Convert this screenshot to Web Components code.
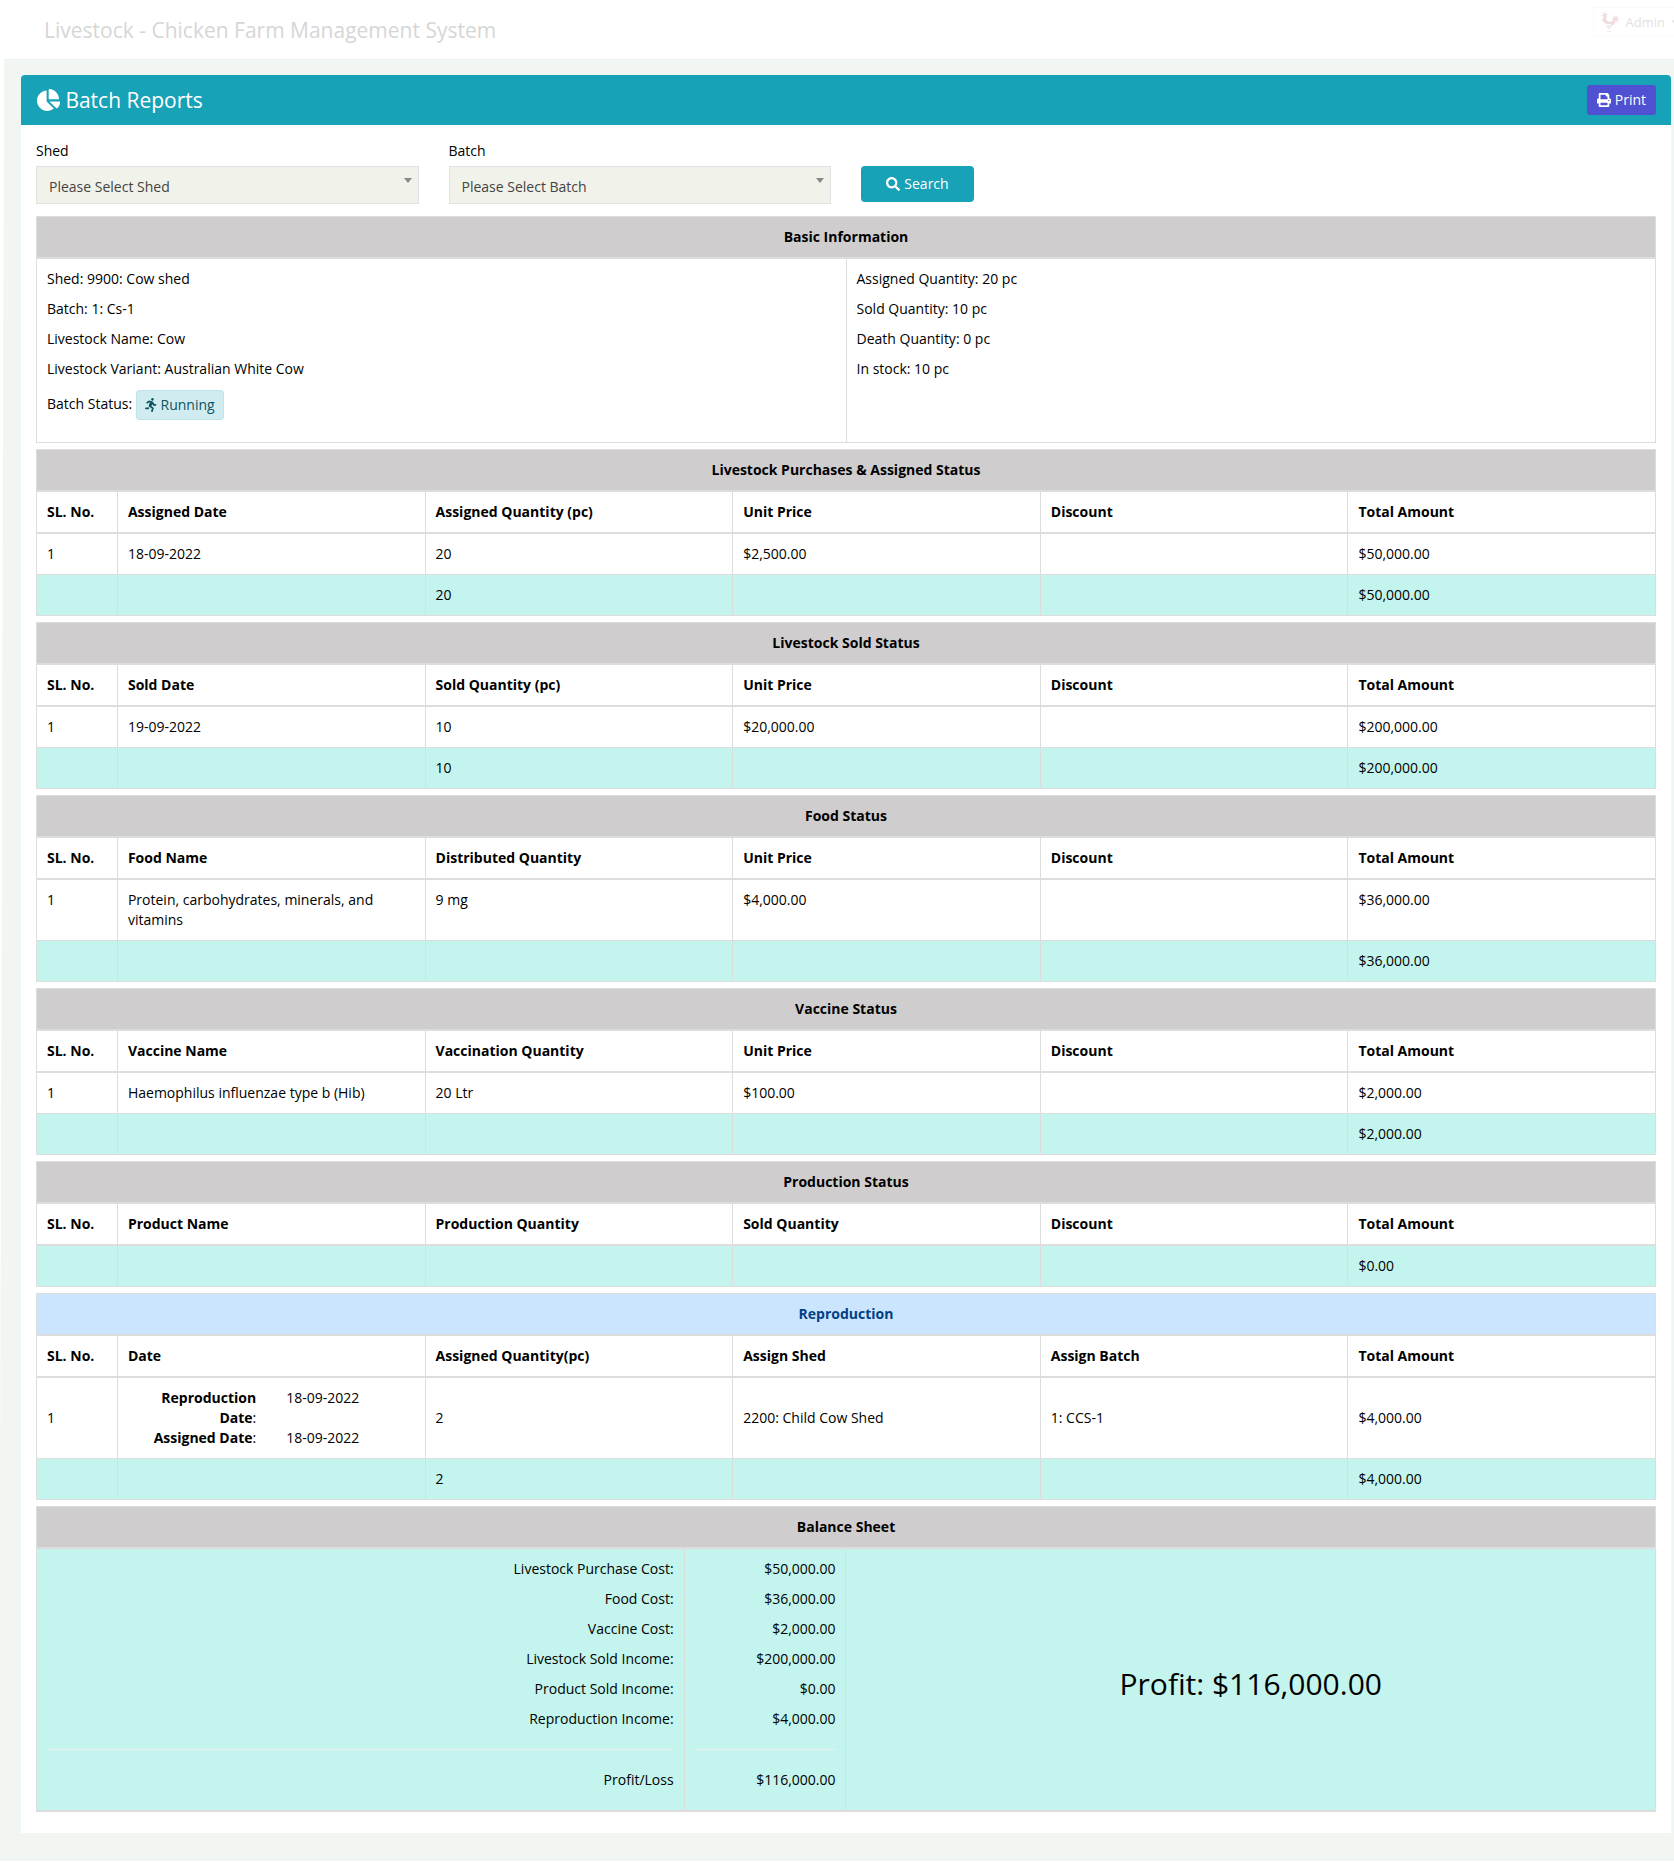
<!DOCTYPE html>
<html lang="en">
<head>
<meta charset="utf-8">
<title>Livestock - Chicken Farm Management System</title>
<style>
  html { background: #fff; }
  body { margin: 0; font: 14px/20px "Open Sans", "Liberation Sans", sans-serif; color: #000; }
</style>
</head>
<body>
<farm-app></farm-app>
<script>
const ICONS = {
  pie: ['0 0 544 512', 'M527.79 288H290.5l158.03 158.03c6.04 6.04 15.98 6.53 22.19.68 38.7-36.46 65.32-85.61 73.13-140.86 1.34-9.46-6.51-17.85-16.06-17.85zm-15.83-64.8C503.72 103.74 408.26 8.28 288.8.04 279.68-.59 272 7.1 272 16.24V240h223.77c9.14 0 16.82-7.68 16.19-16.8zM224 288V50.71c0-9.55-8.39-17.4-17.84-16.06C86.99 51.49-4.1 155.6.14 280.37 4.5 408.51 114.83 513.59 243.03 511.98c50.4-.63 96.97-16.87 135.26-44.03 7.9-5.6 8.42-17.23 1.57-24.08L224 288z'],
  print: ['0 0 512 512', 'M448 192V77.25c0-8.49-3.37-16.62-9.37-22.63L393.37 9.37c-6-6-14.14-9.37-22.63-9.37H96C78.33 0 64 14.33 64 32v160c-35.35 0-64 28.65-64 64v112c0 8.84 7.16 16 16 16h48v96c0 17.67 14.33 32 32 32h320c17.67 0 32-14.33 32-32v-96h48c8.84 0 16-7.16 16-16V256c0-35.35-28.65-64-64-64zm-64 256H128v-96h256v96zm0-224H128V64h192v48c0 8.84 7.16 16 16 16h48v96zm48 72c-13.25 0-24-10.75-24-24 0-13.26 10.75-24 24-24s24 10.74 24 24c0 13.25-10.75 24-24 24z'],
  search: ['0 0 512 512', 'M505 442.7L405.3 343c-4.5-4.5-10.6-7-17-7H372c27.6-35.3 44-79.7 44-128C416 93.1 322.9 0 208 0S0 93.1 0 208s93.1 208 208 208c48.3 0 92.7-16.4 128-44v16.3c0 6.4 2.5 12.5 7 17l99.7 99.7c9.4 9.4 24.6 9.4 33.9 0l28.3-28.3c9.4-9.4 9.4-24.6.1-34zM208 336c-70.7 0-128-57.2-128-128 0-70.7 57.2-128 128-128 70.7 0 128 57.2 128 128 0 70.7-57.2 128-128 128z'],
  running: ['0 0 416 512', 'M272 96c26.51 0 48-21.49 48-48S298.51 0 272 0s-48 21.49-48 48 21.49 48 48 48zM113.69 317.47l-14.8 34.52H32c-17.67 0-32 14.33-32 32s14.33 32 32 32h77.45c19.25 0 36.58-11.44 44.11-29.09l8.79-20.52-10.67-6.3c-17.32-10.23-30.06-25.37-37.99-42.61zM384 223.99h-44.03l-26.06-53.25c-12.5-25.55-35.45-44.23-61.78-50.94l-71.08-21.14c-28.3-6.8-57.77-.55-80.84 17.14l-39.67 30.41c-14.03 10.75-16.69 30.83-5.92 44.86s30.84 16.66 44.86 5.92l39.69-30.41c7.67-5.89 17.44-8 25.27-6.14l14.7 4.37-37.46 87.39c-12.62 29.48-1.31 64.01 26.3 80.31l84.98 50.17-27.47 87.73c-5.28 16.86 4.11 34.82 20.97 40.09 3.19 1 6.41 1.48 9.58 1.48 13.61 0 26.23-8.77 30.52-22.45l31.64-101.06c5.91-20.77-2.89-43.08-21.64-54.39l-61.24-36.14 31.31-78.28 20.27 41.43c8 16.34 24.92 26.89 43.11 26.89H384c17.67 0 32-14.33 32-32s-14.33-31.99-32-31.99z']
};

class FaIcon extends HTMLElement {
  connectedCallback() {
    const [box, d] = ICONS[this.getAttribute('name')];
    this.attachShadow({ mode: 'open' }).innerHTML = `
      <style>:host{display:inline-flex;flex:none} svg{height:var(--icon-size,14px);width:auto;fill:currentColor}</style>
      <svg viewBox="${box}" aria-hidden="true"><path d="${d}"/></svg>`;
  }
}

class SiteHeader extends HTMLElement {
  connectedCallback() {
    this.attachShadow({ mode: 'open' }).innerHTML = `
      <style>
        :host{display:flex;justify-content:space-between;align-items:flex-start;height:59px;margin-left:4px;padding-left:40px;border-bottom:1px solid #edf1f3;overflow:hidden;box-sizing:content-box}
        h1{margin:0;padding-top:15px;font-size:21px;line-height:30px;font-weight:400;color:#d6d6d6}
        a{display:flex;align-items:center;gap:7px;height:28px;margin-top:7px;padding-left:7px;border:1px solid #fafafa;border-right:0;color:#e2e2e2;font-size:13px;text-decoration:none}
        i{width:2px;height:4px;background:#e4e4e4;clip-path:polygon(0 0,100% 0,100% 100%)}
      </style>
      <h1>Livestock - Chicken Farm Management System</h1>
      <a href="#account">
        <svg width="18" height="20" viewBox="0 0 18 20" aria-hidden="true">
          <path fill="#f1dcdc" d="M0 3 3 3 2 1 5 0 4 2 7 2 5 4 6 5 5 6 6 9 9 10 12 9 11 7 13 6 12 4 15 5 16 4 18 8 16 7 17 10 14 9 14 11 11 14 10 12 5 12 3 10 0 8 3 7 1 6 3 5z"/>
          <path fill="#f6eaea" d="M5 13h6l-1 3-2 1-2-1zM6 19h4v1H6z"/>
        </svg>
        <span>Admin</span><i></i>
      </a>`;
  }
}

class SelectField extends HTMLElement {
  connectedCallback() {
    const label = this.getAttribute('label');
    this.attachShadow({ mode: 'open' }).innerHTML = `
      <style>
        :host{display:flex;flex-direction:column;gap:4px}
        label{line-height:22px}
        .box{display:grid;align-items:start}
        select,.box::after{grid-area:1/1}
        select{appearance:none;width:100%;height:38px;margin:0;padding:4px 12px 0;border:1px solid #e0e1e3;border-radius:0;background:#f1f2e9;color:#444;font:inherit}
        .box::after{content:"";justify-self:end;margin:12px 7px 0 0;border:4px solid transparent;border-top:5px solid #888;border-bottom:0;pointer-events:none}
      </style>
      <label for="s">${label}</label>
      <div class="box"><select id="s"><option>Please Select ${label}</option></select></div>`;
  }
}

const TABLE_CSS = `
  :host{display:block;margin-bottom:6px}
  table{width:100%;border-collapse:collapse;table-layout:fixed;border:1px solid #ddd}
  th,td{padding:10px;border:1px solid #ddd;text-align:left;vertical-align:top;font-weight:400}
  thead th{border-bottom-width:2px;font-weight:700}
  th.title{text-align:center;background:#d0cdce}
  th.blue{background:#cce5ff;color:#004085}
  .total td{background:#c3f4ed}
  p{margin:0 0 10px}`;

class StatusTable extends HTMLElement {
  connectedCallback() {
    const split = s => s.split('|');
    const list = a => this.hasAttribute(a) ? [split(this.getAttribute(a))] : [];
    const row = (cells, cls = '') => `<tr class="${cls}">${cells.map(c => `<td>${c}</td>`).join('')}</tr>`;
    const dated = this.hasAttribute('dates');
    const rows = list('row').map(r => {
      if (!dated) return row(r);
      const [a, b] = split(this.getAttribute('dates'));
      r[1] = `<dl><dt><b>Reproduction Date</b>:</dt><dd>${a}</dd><dt><b>Assigned Date</b>:</dt><dd>${b}</dd></dl>`;
      return row(r, 'mid');
    }).join('');
    this.attachShadow({ mode: 'open' }).innerHTML = `
      <style>${TABLE_CSS}
        .mid td{vertical-align:middle}
        dl{display:grid;grid-template-columns:1fr 1fr;column-gap:30px;margin:0}
        dt{text-align:right} dd{margin:0}
        .total td{height:20px}
      </style>
      <table>
        <colgroup><col style="width:5%"><col span="5" style="width:19%"></colgroup>
        <thead>
          <tr><th colspan="6" class="title ${dated ? 'blue' : ''}">${this.getAttribute('heading')}</th></tr>
          <tr>${split(this.getAttribute('cols')).map(c => `<th>${c}</th>`).join('')}</tr>
        </thead>
        <tbody>${rows}${list('total').map(t => row(t, 'total')).join('')}</tbody>
      </table>`;
  }
}

class StatusBadge extends HTMLElement {
  connectedCallback() {
    this.attachShadow({ mode: 'open' }).innerHTML = `
      <style>:host{display:inline-flex;align-items:center;gap:4px;height:28px;padding:0 8px;border:1px solid #bee5eb;border-radius:3px;background:#d1ecf1;color:#0c5460}</style>
      <fa-icon name="running"></fa-icon><slot></slot>`;
  }
}

class BasicInfo extends HTMLElement {
  connectedCallback() {
    this.attachShadow({ mode: 'open' }).innerHTML = `
      <style>${TABLE_CSS}
        .status{display:flex;align-items:flex-start;gap:4px;height:32px;padding-top:1px;line-height:28px}
      </style>
      <table>
        <thead><tr><th colspan="2" class="title">Basic Information</th></tr></thead>
        <tbody><tr>
          <td><p>Shed: 9900: Cow shed</p><p>Batch: 1: Cs-1</p><p>Livestock Name: Cow</p><p>Livestock Variant: Australian White Cow</p>
            <p class="status"><span>Batch Status:</span><status-badge>Running</status-badge></p></td>
          <td><p>Assigned Quantity: 20 pc</p><p>Sold Quantity: 10 pc</p><p>Death Quantity: 0 pc</p><p>In stock: 10 pc</p></td>
        </tr></tbody>
      </table>`;
  }
}

class BalanceSheet extends HTMLElement {
  connectedCallback() {
    const lines = [['Livestock Purchase Cost:', '$50,000.00'], ['Food Cost:', '$36,000.00'], ['Vaccine Cost:', '$2,000.00'],
      ['Livestock Sold Income:', '$200,000.00'], ['Product Sold Income:', '$0.00'], ['Reproduction Income:', '$4,000.00']];
    const col = i => lines.map(l => `<p>${l[i]}</p>`).join('') + '<hr>';
    this.attachShadow({ mode: 'open' }).innerHTML = `
      <style>${TABLE_CSS}
        table{border-bottom-width:2px}
        .total td{text-align:right}
        hr{margin:20px 0;border:0;border-top:1px solid #eee}
        .total .profit{text-align:center;vertical-align:middle}
        h2{margin:18px 0 10px;font-size:30px;line-height:32px;font-weight:400}
      </style>
      <table>
        <colgroup><col style="width:40%"><col style="width:10%"><col style="width:50%"></colgroup>
        <thead><tr><th colspan="3" class="title">Balance Sheet</th></tr></thead>
        <tbody><tr class="total">
          <td>${col(0)}<p>Profit/Loss</p></td>
          <td>${col(1)}<p>$116,000.00</p></td>
          <td class="profit"><h2>Profit: $116,000.00</h2></td>
        </tr></tbody>
      </table>`;
  }
}

class ReportCard extends HTMLElement {
  connectedCallback() {
    this.attachShadow({ mode: 'open' }).innerHTML = `
      <style>
        :host{display:block;background:#fff;border-radius:4px 4px 0 0;overflow:hidden}
        header{display:flex;align-items:center;justify-content:space-between;height:50px;padding:0 15px 0 16px;background:#17a2b8;color:#fff}
        h2{display:flex;align-items:center;gap:5px;margin:0;font-size:21px;line-height:30px;font-weight:400;--icon-size:22px}
        button{display:inline-flex;align-items:center;justify-content:center;gap:4px;margin:0;padding:0 10px;height:30px;border:0;border-radius:3px;background:#5050d2;color:#fff;font:inherit}
        .body{padding:15px}
        form{display:grid;grid-template-columns:repeat(4,1fr);gap:30px;margin-bottom:12px}
        form button{justify-self:start;width:113px;height:36px;margin-top:26px;border-radius:4px;background:#17a2b8}
      </style>
      <header><h2><fa-icon name="pie"></fa-icon><span>Batch Reports</span></h2>
        <button type="button"><fa-icon name="print"></fa-icon><span>Print</span></button></header>
      <div class="body">
        <form>
          <select-field label="Shed"></select-field>
          <select-field label="Batch"></select-field>
          <button type="button"><fa-icon name="search"></fa-icon><span>Search</span></button>
        </form>
        <slot></slot>
      </div>`;
  }
}

class FarmApp extends HTMLElement {
  connectedCallback() {
    this.attachShadow({ mode: 'open' }).innerHTML = `
      <style>
        :host{display:block}
        main{padding:15px 3px 28px 21px;background:#f1f6f3;clip-path:polygon(4px 0,100% 0,100% 100%,0 100%,0 80%)}
      </style>
      <site-header></site-header>
      <main>
        <report-card>
          <basic-info></basic-info>
          <status-table heading="Livestock Purchases &amp;amp; Assigned Status" cols="SL. No.|Assigned Date|Assigned Quantity (pc)|Unit Price|Discount|Total Amount"
            row="1|18-09-2022|20|$2,500.00||$50,000.00" total="||20|||$50,000.00"></status-table>
          <status-table heading="Livestock Sold Status" cols="SL. No.|Sold Date|Sold Quantity (pc)|Unit Price|Discount|Total Amount"
            row="1|19-09-2022|10|$20,000.00||$200,000.00" total="||10|||$200,000.00"></status-table>
          <status-table heading="Food Status" cols="SL. No.|Food Name|Distributed Quantity|Unit Price|Discount|Total Amount"
            row="1|Protein, carbohydrates, minerals, and vitamins|9 mg|$4,000.00||$36,000.00" total="|||||$36,000.00"></status-table>
          <status-table heading="Vaccine Status" cols="SL. No.|Vaccine Name|Vaccination Quantity|Unit Price|Discount|Total Amount"
            row="1|Haemophilus influenzae type b (Hib)|20 Ltr|$100.00||$2,000.00" total="|||||$2,000.00"></status-table>
          <status-table heading="Production Status" cols="SL. No.|Product Name|Production Quantity|Sold Quantity|Discount|Total Amount"
            total="|||||$0.00"></status-table>
          <status-table heading="Reproduction" cols="SL. No.|Date|Assigned Quantity(pc)|Assign Shed|Assign Batch|Total Amount"
            dates="18-09-2022|18-09-2022" row="1||2|2200: Child Cow Shed|1: CCS-1|$4,000.00" total="||2|||$4,000.00"></status-table>
          <balance-sheet></balance-sheet>
        </report-card>
      </main>`;
  }
}

customElements.define('fa-icon', FaIcon);
customElements.define('site-header', SiteHeader);
customElements.define('select-field', SelectField);
customElements.define('status-badge', StatusBadge);
customElements.define('basic-info', BasicInfo);
customElements.define('status-table', StatusTable);
customElements.define('balance-sheet', BalanceSheet);
customElements.define('report-card', ReportCard);
customElements.define('farm-app', FarmApp);
</script>
</body>
</html>
